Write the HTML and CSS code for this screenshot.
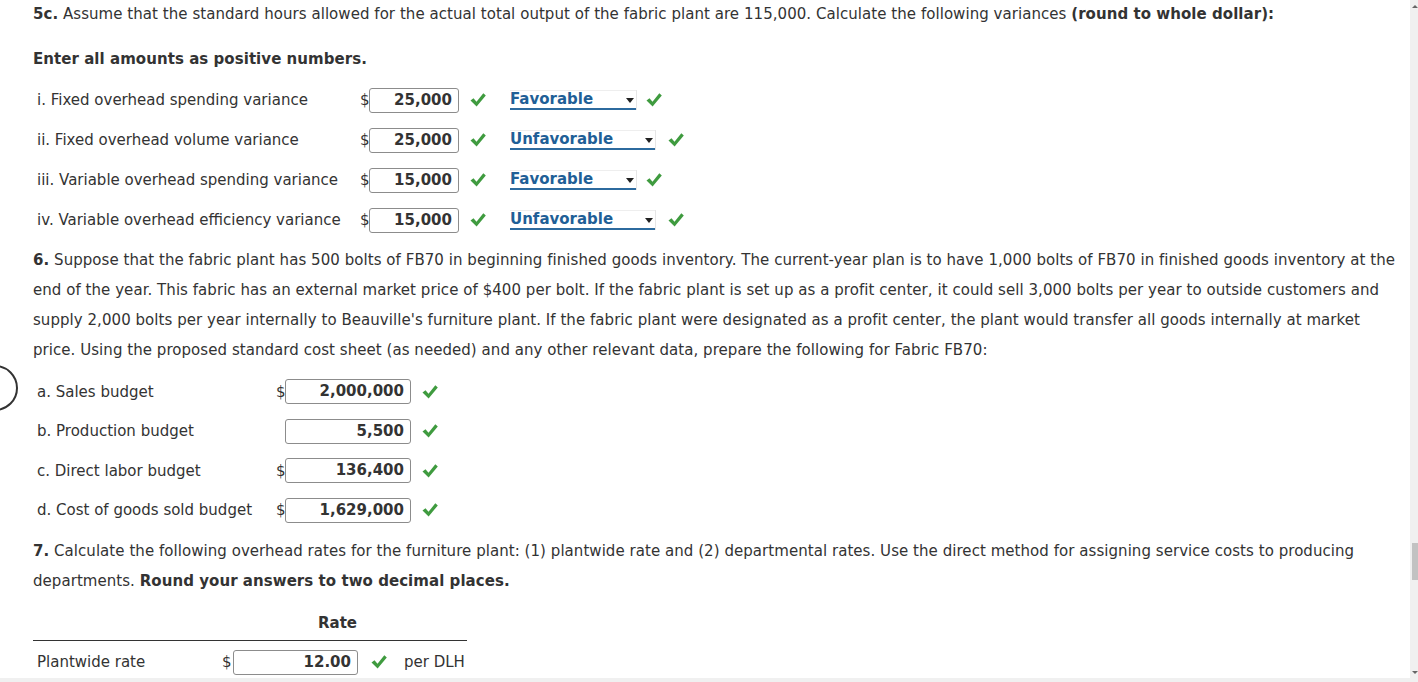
FILE: index.html
```html
<!DOCTYPE html>
<html lang="en">
<head>
<meta charset="utf-8">
<title>Budget questions</title>
<link rel="stylesheet" href="styles.css">
</head>
<body>
<div class="page">
  <main class="content">
    <p class="q q-head"><b>5c.</b> Assume that the standard hours allowed for the actual total output of the fabric plant are 115,000. Calculate the following variances <b>(round to whole dollar):</b></p>
    <p class="q q-note"><b>Enter all amounts as positive numbers.</b></p>

    <div class="rows rows-var">
      <div class="row">
        <span class="lbl">i. Fixed overhead spending variance</span>
        <span class="cur">$</span><span class="inp">25,000</span>
        <svg class="chk" viewBox="0 0 16 16"><polygon points="0.5,8.5 3.5,6.3 6.5,9.8 13.3,1.3 15.8,3.4 6.6,14.6"/></svg>
        <span class="sel sel-fav">Favorable<i class="arr"></i></span>
        <svg class="chk chk2" viewBox="0 0 16 16"><polygon points="0.5,8.5 3.5,6.3 6.5,9.8 13.3,1.3 15.8,3.4 6.6,14.6"/></svg>
      </div>
      <div class="row">
        <span class="lbl">ii. Fixed overhead volume variance</span>
        <span class="cur">$</span><span class="inp">25,000</span>
        <svg class="chk" viewBox="0 0 16 16"><polygon points="0.5,8.5 3.5,6.3 6.5,9.8 13.3,1.3 15.8,3.4 6.6,14.6"/></svg>
        <span class="sel sel-unf">Unfavorable<i class="arr"></i></span>
        <svg class="chk chk2" viewBox="0 0 16 16"><polygon points="0.5,8.5 3.5,6.3 6.5,9.8 13.3,1.3 15.8,3.4 6.6,14.6"/></svg>
      </div>
      <div class="row">
        <span class="lbl">iii. Variable overhead spending variance</span>
        <span class="cur">$</span><span class="inp">15,000</span>
        <svg class="chk" viewBox="0 0 16 16"><polygon points="0.5,8.5 3.5,6.3 6.5,9.8 13.3,1.3 15.8,3.4 6.6,14.6"/></svg>
        <span class="sel sel-fav">Favorable<i class="arr"></i></span>
        <svg class="chk chk2" viewBox="0 0 16 16"><polygon points="0.5,8.5 3.5,6.3 6.5,9.8 13.3,1.3 15.8,3.4 6.6,14.6"/></svg>
      </div>
      <div class="row">
        <span class="lbl">iv. Variable overhead efficiency variance</span>
        <span class="cur">$</span><span class="inp">15,000</span>
        <svg class="chk" viewBox="0 0 16 16"><polygon points="0.5,8.5 3.5,6.3 6.5,9.8 13.3,1.3 15.8,3.4 6.6,14.6"/></svg>
        <span class="sel sel-unf">Unfavorable<i class="arr"></i></span>
        <svg class="chk chk2" viewBox="0 0 16 16"><polygon points="0.5,8.5 3.5,6.3 6.5,9.8 13.3,1.3 15.8,3.4 6.6,14.6"/></svg>
      </div>
    </div>

    <p class="q q-para q6"><b>6.</b> Suppose that the fabric plant has 500 bolts of FB70 in beginning finished goods inventory. The current-year plan is to have 1,000 bolts of FB70 in finished goods inventory at the<br>end of the year. This fabric has an external market price of $400 per bolt. If the fabric plant is set up as a profit center, it could sell 3,000 bolts per year to outside customers and<br>supply 2,000 bolts per year internally to Beauville's furniture plant. If the fabric plant were designated as a profit center, the plant would transfer all goods internally at market<br>price. Using the proposed standard cost sheet (as needed) and any other relevant data, prepare the following for Fabric FB70:</p>

    <div class="rows rows-bud">
      <div class="row">
        <span class="lbl">a. Sales budget</span>
        <span class="cur">$</span><span class="inp">2,000,000</span>
        <svg class="chk" viewBox="0 0 16 16"><polygon points="0.5,8.5 3.5,6.3 6.5,9.8 13.3,1.3 15.8,3.4 6.6,14.6"/></svg>
      </div>
      <div class="row">
        <span class="lbl">b. Production budget</span>
        <span class="cur"></span><span class="inp">5,500</span>
        <svg class="chk" viewBox="0 0 16 16"><polygon points="0.5,8.5 3.5,6.3 6.5,9.8 13.3,1.3 15.8,3.4 6.6,14.6"/></svg>
      </div>
      <div class="row">
        <span class="lbl">c. Direct labor budget</span>
        <span class="cur">$</span><span class="inp">136,400</span>
        <svg class="chk" viewBox="0 0 16 16"><polygon points="0.5,8.5 3.5,6.3 6.5,9.8 13.3,1.3 15.8,3.4 6.6,14.6"/></svg>
      </div>
      <div class="row">
        <span class="lbl">d. Cost of goods sold budget</span>
        <span class="cur">$</span><span class="inp">1,629,000</span>
        <svg class="chk" viewBox="0 0 16 16"><polygon points="0.5,8.5 3.5,6.3 6.5,9.8 13.3,1.3 15.8,3.4 6.6,14.6"/></svg>
      </div>
    </div>

    <p class="q q-para q7"><b>7.</b> Calculate the following overhead rates for the furniture plant: (1) plantwide rate and (2) departmental rates. Use the direct method for assigning service costs to producing<br>departments. <b>Round your answers to two decimal places.</b></p>

    <div class="rate-table">
      <div class="rate-head">
        <span class="rate-blank"></span>
        <span class="rate-title">Rate</span>
      </div>
      <div class="row rate-row">
        <span class="lbl">Plantwide rate</span>
        <span class="cur">$</span><span class="inp">12.00</span>
        <svg class="chk" viewBox="0 0 16 16"><polygon points="0.5,8.5 3.5,6.3 6.5,9.8 13.3,1.3 15.8,3.4 6.6,14.6"/></svg>
        <span class="unit">per DLH</span>
      </div>
    </div>
  </main>
  <div class="vscroll">
    <i class="vs-up"></i>
    <div class="vs-thumb"></div>
    <i class="vs-down"></i>
  </div>
</div>
<div class="ring"></div>
<div class="hedge"></div>
</body>
</html>
```

FILE: styles.css
```css
html, body {
  margin: 0;
  padding: 0;
}
body {
  font-family: "DejaVu Sans", Verdana, sans-serif;
  font-size: 15px;
  color: #333;
  background: #fff;
  overflow: hidden;
}
.page {
  display: flex;
  height: 682px;
}
.content {
  flex: 1;
  padding-left: 33px;
  min-width: 0;
}
.q {
  margin: 0;
  white-space: nowrap;
  letter-spacing: 0.05px;
}
.q b {
  font-weight: bold;
}
.q-head {
  line-height: 28px;
}
.q-note {
  line-height: 28px;
  margin-top: 17px;
}
.q-para {
  line-height: 30px;
}
.q6 {
  margin-top: 5px;
}
.q7 {
  margin-top: 6px;
}

.rows {
  display: flex;
  flex-direction: column;
}
.rows-var {
  margin-top: 7px;
}
.rows-var .row {
  height: 40px;
}
.rows-bud {
  margin-top: 7px;
}
.rows-bud .row {
  height: 39.5px;
}
.row {
  display: flex;
  align-items: center;
  padding-left: 4px;
}
.lbl {
  flex: none;
}
.rows-var .lbl { width: 323px; }
.rows-bud .lbl { width: 239px; }
.cur {
  width: 9px;
  flex: none;
  text-align: left;
}
.inp {
  flex: none;
  box-sizing: border-box;
  height: 25px;
  border: 1px solid #8c8c8c;
  border-radius: 3px;
  text-align: right;
  padding-right: 6px;
  font-weight: bold;
  line-height: 23px;
  color: #333;
  background: #fff;
}
.rows-var .inp { width: 90px; }
.rows-bud .inp { width: 126px; }
.chk {
  flex: none;
  width: 16px;
  height: 16px;
  margin-left: 11px;
  fill: #3f9b3f;
}
.rows-bud .chk { margin-left: 11px; }
.sel {
  flex: none;
  position: relative;
  box-sizing: border-box;
  margin-left: 24px;
  height: 20px;
  line-height: 17px;
  padding-left: 0;
  font-weight: bold;
  color: #1f5f97;
  border-bottom: 2px solid #2c6a9e;
  border-top: 1px solid #eee;
  background: #fff;
  box-shadow: 1px 0 0 #e6e6e6;
}
.sel-fav { width: 126px; }
.sel-unf { width: 145px; }
.arr {
  position: absolute;
  right: 2px;
  top: 7px;
  width: 0;
  height: 0;
  border-left: 4px solid transparent;
  border-right: 4px solid transparent;
  border-top: 5px solid #222;
}
.chk2 { margin-left: 10px; }
.sel-unf + .chk2 { margin-left: 13px; }

.rate-table {
  width: 434px;
  margin-top: 9px;
}
.rate-head {
  display: flex;
  height: 35px;
  border-bottom: 1px solid #333;
  align-items: center;
}
.rate-blank {
  width: 219px;
  flex: none;
}
.rate-title {
  flex: 1;
  text-align: center;
  font-weight: bold;
  padding-right: 44px;
}
.rate-row {
  height: 42px;
}
.rate-row .lbl { width: 185px; }
.rate-row .cur { width: 11px; }
.rate-row .inp { width: 125px; }
.rate-row .chk { margin-left: 13px; }
.unit {
  margin-left: 17px;
}

.vscroll {
  flex: none;
  width: 8px;
  background: #f0f0f0;
  position: relative;
}
.vs-thumb {
  position: absolute;
  left: 2px;
  right: 0;
  top: 543px;
  height: 37px;
  background: #c2c2c2;
}
.vs-up, .vs-down {
  position: absolute;
  left: 2px;
  width: 0;
  height: 0;
  border-left: 3px solid transparent;
  border-right: 3px solid transparent;
}
.vs-up {
  top: 5px;
  border-bottom: 3px solid #666;
}
.vs-down {
  bottom: 8px;
  border-top: 3px solid #666;
}
.ring {
  position: absolute;
  left: -28px;
  top: 365px;
  width: 42px;
  height: 42px;
  border: 2.5px solid #333;
  border-radius: 50%;
}
.hedge {
  position: absolute;
  left: 0;
  right: 0;
  bottom: 0;
  height: 4px;
  background: #f0f0f0;
}
```
